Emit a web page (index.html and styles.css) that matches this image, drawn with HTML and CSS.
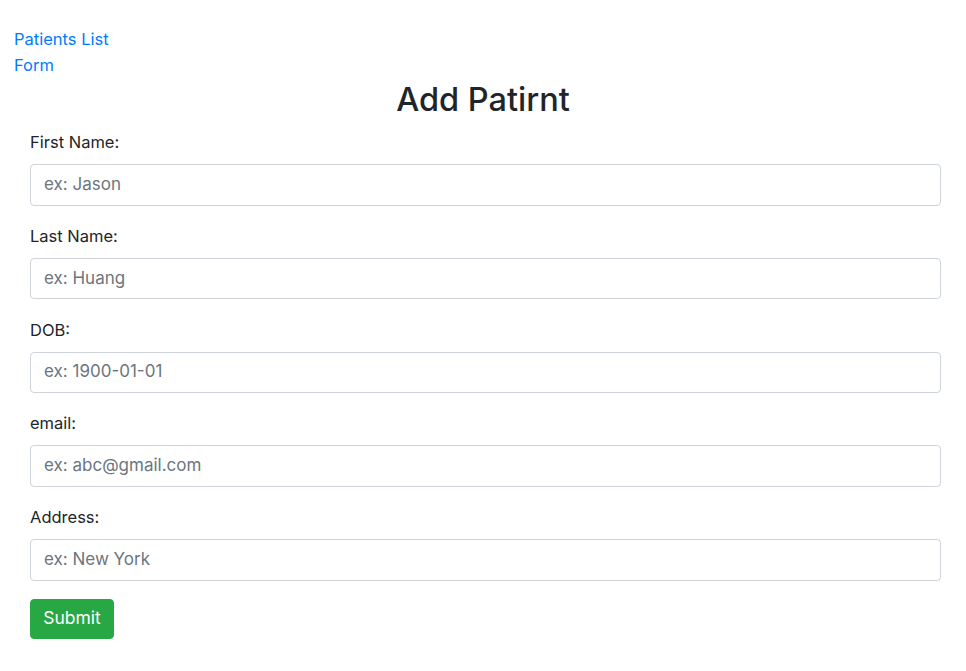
FILE: index.html
```html
<!DOCTYPE html>
<html>
<head>
<meta charset="utf-8">
<link rel="stylesheet" href="styles.css">
</head>
<body>
<nav class="nav">
  <a href="#" class="nav-link">Patients List</a>
  <a href="#" class="nav-link">Form</a>
</nav>
<h2 class="title">Add Patirnt</h2>
<form class="form">
  <div class="group">
    <label class="label">First Name:</label>
    <input class="input" type="text" placeholder="ex: Jason">
  </div>
  <div class="group">
    <label class="label">Last Name:</label>
    <input class="input" type="text" placeholder="ex: Huang">
  </div>
  <div class="group">
    <label class="label">DOB:</label>
    <input class="input" type="text" placeholder="ex: 1900-01-01">
  </div>
  <div class="group">
    <label class="label">email:</label>
    <input class="input" type="text" placeholder="ex: abc@gmail.com">
  </div>
  <div class="group">
    <label class="label">Address:</label>
    <input class="input" type="text" placeholder="ex: New York">
  </div>
  <button type="button" class="btn">Submit</button>
</form>
</body>
</html>
```
FILE: styles.css
```css
html, body { margin: 0; padding: 0; }
body {
  font-family: Inter, "Liberation Sans", sans-serif;
  font-size: 16.5px;
  line-height: 1.5;
  color: #212529;
  background: #fff;
}
.nav {
  display: flex;
  flex-direction: column;
  padding: 26px 0 0 14px;
}
.nav-link {
  color: #007bff;
  text-decoration: none;
  line-height: 26px;
}
.title {
  margin: 0 0 10px;
  text-align: center;
  font-size: 32.5px;
  font-weight: 500;
  line-height: 44px;
}
.form {
  padding: 0 25px 0 30px;
}
.group {
  margin-bottom: 20.25px;
}
.label {
  display: block;
  margin-bottom: 11px;
  line-height: 21px;
}
.input {
  display: block;
  box-sizing: border-box;
  width: 100%;
  height: 41.5px;
  padding: 4px 13px 6px;
  font-family: inherit;
  font-size: 17px;
  color: #495057;
  border: 1px solid #ced4da;
  border-radius: 4px;
  background: #fff;
}
.input::placeholder { color: #6c757d; }
.btn {
  display: block;
  margin-top: -2px;
  box-sizing: border-box;
  width: 84px;
  height: 40px;
  padding: 0 0 2px;
  font-family: inherit;
  font-size: 17.5px;
  color: #fff;
  background: #28a745;
  border: 1px solid #28a745;
  border-radius: 4px;
}
```
